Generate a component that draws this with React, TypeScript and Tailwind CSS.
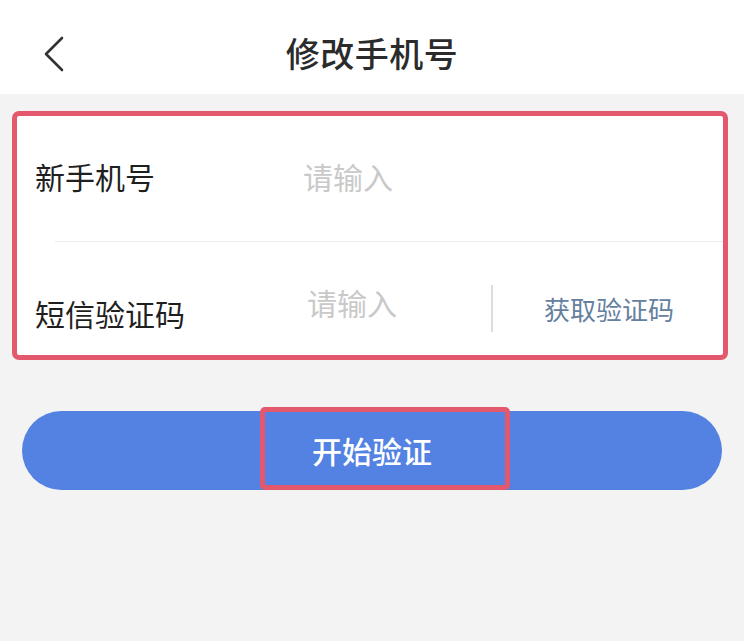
const font = { fontFamily: '"Noto Sans CJK SC", "Noto Sans", sans-serif' };

const ChangePhone = () => {
    return (
        <div className="min-h-[641px] w-[744px] bg-[#f3f3f3]" style={font}>
            {/* header */}
            <div className="relative h-[94px] bg-white flex items-center justify-center pt-[10px]">
                <svg
                    className="absolute left-[42px] top-[36px]"
                    width="24"
                    height="36"
                    viewBox="0 0 24 36"
                    fill="none"
                >
                    <path d="M20 2 L4 18 L20 34" stroke="#333" strokeWidth="2.6" strokeLinecap="round" strokeLinejoin="round" />
                </svg>
                <h1 className="text-[34px] font-medium text-[#2b2b2b] tracking-[0.5px]">修改手机号</h1>
            </div>

            {/* form card */}
            <div className="mt-[17px] ml-[12px] w-[716px] h-[249px] border-[5px] border-[#e4586d] rounded-[7px] bg-white">
                <div className="h-[125px] flex items-center pl-[18px] pb-[4px]">
                    <span className="w-[268px] text-[30px] text-[#1f1f1f]">新手机号</span>
                    <span className="text-[30px] text-[#c9c9c9]">请输入</span>
                </div>
                <div className="ml-[38px] h-[1px] bg-[#ececec]" />
                <div className="h-[113px] flex items-center pl-[18px] pt-[20px]">
                    <span className="w-[272px] text-[30px] text-[#1f1f1f] mt-[10px]">短信验证码</span>
                    <span className="w-[184px] text-[30px] text-[#c9c9c9] mb-[12px]">请输入</span>
                    <div className="w-[2px] h-[47px] bg-[#dcdcdc]" />
                    <span className="ml-[51px] text-[26px] text-[#66809f]">获取验证码</span>
                </div>
            </div>

            {/* submit */}
            <div className="relative mt-[51px] ml-[22px] w-[700px] h-[79px] rounded-full bg-[#5382e2] flex items-center justify-center">
                <span className="text-[30px] font-medium text-white">开始验证</span>
                <div className="absolute left-[238px] top-[-4px] w-[250px] h-[83px] border-[5px] border-[#e4586d] rounded-[5px]" />
            </div>
        </div>
    );
};

export default function App() {
    return <ChangePhone />;
}
